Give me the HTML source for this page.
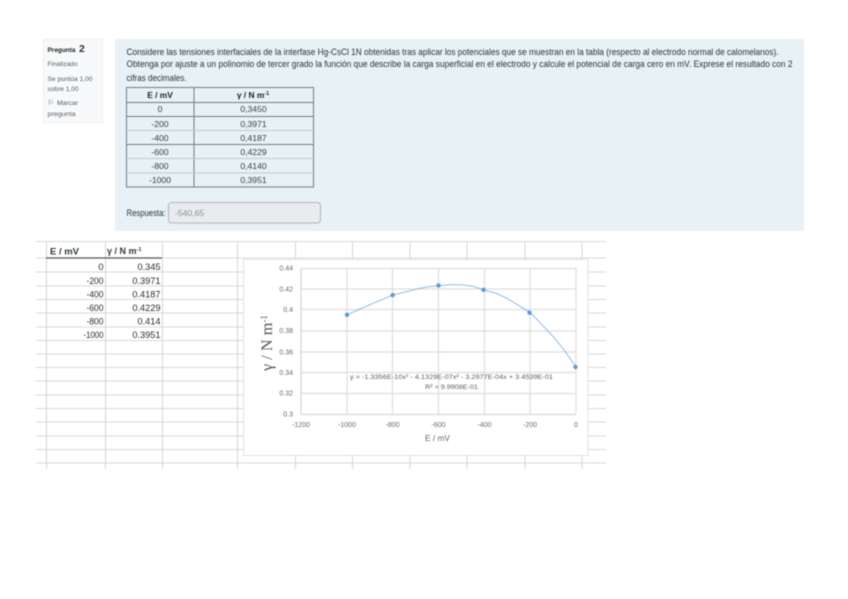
<!DOCTYPE html>
<html lang="es">
<head>
<meta charset="utf-8">
<title>Pregunta 2</title>
<style>
html,body{margin:0;padding:0;background:#fff;width:848px;height:599px;overflow:hidden}
svg{display:block;filter:blur(.5px)}
text{font-family:"Liberation Sans",sans-serif;fill:#333}
.q{font-size:9px;fill:#2a3236}
.s{font-size:6.8px;fill:#565d62}
.t{font-size:8.6px;text-anchor:middle;fill:#3a4145}
.th{font-size:8.4px;text-anchor:middle;font-weight:bold;fill:#222}
.x{font-size:9.2px;text-anchor:end;fill:#2c2c2c}
.a{font-size:7px;fill:#6a6a6a;text-anchor:middle}
.ar{font-size:7px;fill:#6a6a6a;text-anchor:end}
.g{stroke:#dedede;stroke-width:1.2}
.sh{stroke:#d8d8d8;stroke-width:1.1}
</style>
</head>
<body>
<svg width="848" height="599" viewBox="0 0 848 599" xmlns="http://www.w3.org/2000/svg">
<rect width="848" height="599" fill="#fff"/>

<!-- left info -->
<rect x="43.5" y="39.5" width="59" height="83" fill="#f8f9fa" stroke="#eef0f1"/>
<text x="47.5" y="52" style="font-size:6.8px;font-weight:bold;fill:#222" textLength="28" lengthAdjust="spacingAndGlyphs">Pregunta</text>
<text x="79" y="52" style="font-size:10.5px;font-weight:bold;fill:#333">2</text>
<text class="s" x="47.5" y="66" textLength="30" lengthAdjust="spacingAndGlyphs">Finalizado</text>
<text class="s" x="47.5" y="81" textLength="45" lengthAdjust="spacingAndGlyphs">Se puntúa 1,00</text>
<text class="s" x="47.5" y="91" textLength="31" lengthAdjust="spacingAndGlyphs">sobre 1,00</text>
<text class="s" x="47.5" y="105">⚐</text>
<text class="s" x="57" y="105" textLength="21" lengthAdjust="spacingAndGlyphs">Marcar</text>
<text class="s" x="47.5" y="116" textLength="28" lengthAdjust="spacingAndGlyphs">pregunta</text>

<!-- main panel -->
<rect x="115" y="39" width="689" height="192" fill="#e7f1f6"/>
<text class="q" x="126.5" y="55" textLength="652" lengthAdjust="spacingAndGlyphs">Considere las tensiones interfaciales de la interfase Hg-CsCl 1N obtenidas tras aplicar los potenciales que se muestran en la tabla (respecto al electrodo normal de calomelanos).</text>
<text class="q" x="126.5" y="67" textLength="666" lengthAdjust="spacingAndGlyphs">Obtenga por ajuste a un polinomio de tercer grado la función que describe la carga superficial en el electrodo y calcule el potencial de carga cero en mV. Exprese el resultado con 2</text>
<text class="q" x="126.5" y="81" textLength="60" lengthAdjust="spacingAndGlyphs">cifras decimales.</text>

<!-- question table -->
<g fill="none" stroke="#747c80" stroke-width="1">
<rect x="126.500" y="87.500" width="187" height="99.500"/>
<path d="M194 87.500V187M126.500 102.500H313.500M126.500 116.500H313.500M126.500 144.500H313.500"/>
</g>
<path d="M126.500 130.500H313.500M126.500 158.500H313.500M126.500 173H313.500" stroke="#c2cbcf" stroke-width="1" fill="none"/>
<text class="th" x="160" y="98">E / mV</text>
<text class="th" x="253" y="98">γ / N m<tspan dy="-3" style="font-size:5.5px">-1</tspan></text>
<text class="t" x="160" y="112">0</text><text class="t" x="253.500" y="112">0,3450</text>
<text class="t" x="160" y="127">-200</text><text class="t" x="253.500" y="127">0,3971</text>
<text class="t" x="160" y="141">-400</text><text class="t" x="253.500" y="141">0,4187</text>
<text class="t" x="160" y="155">-600</text><text class="t" x="253.500" y="155">0,4229</text>
<text class="t" x="160" y="169">-800</text><text class="t" x="253.500" y="169">0,4140</text>
<text class="t" x="160" y="183">-1000</text><text class="t" x="253.500" y="183">0,3951</text>

<!-- answer -->
<text class="q" x="126.500" y="216" textLength="39" lengthAdjust="spacingAndGlyphs">Respuesta:</text>
<rect x="168.500" y="202.500" width="152" height="20.500" rx="3" fill="#e9ecef" stroke="#aeb6bc"/>
<text x="175" y="216" style="font-size:8.6px;fill:#858d92">-540,65</text>

<!-- spreadsheet grid -->
<path class="sh" fill="none" d="M36 241.500H606M36 272H606M36 286H606M36 299.500H606M36 313H606M36 327H606M36 340.500H606M36 354H606M36 367.500H606M36 381H606M36 395H606M36 408.500H606M36 422H606M36 436H606M36 449.500H606M36 463H606M36 258H606"/>
<path class="sh" fill="none" d="M46.500 241V469M105.500 241V469M162.500 241V469M237.500 241V469M295.500 241V469M352.500 241V469M410 241V469M467 241V469M525 241V469M582 241V469"/>
<path d="M46 258H162" stroke="#555" stroke-width="1.200"/>
<text x="50" y="254.500" style="font-size:9px;font-weight:bold;fill:#2f3a3a" textLength="29" lengthAdjust="spacingAndGlyphs">E / mV</text>
<text x="107" y="254" style="font-size:9px;font-weight:bold;fill:#2f3a3a">γ / N m<tspan dy="-3" style="font-size:5.5px">-1</tspan></text>
<text class="x" x="103.500" y="270">0</text><text class="x" x="160.500" y="270">0.345</text>
<text class="x" x="103.500" y="284" textLength="17" lengthAdjust="spacingAndGlyphs">-200</text><text class="x" x="160.500" y="284">0.3971</text>
<text class="x" x="103.500" y="297.500" textLength="17" lengthAdjust="spacingAndGlyphs">-400</text><text class="x" x="160.500" y="297.500">0.4187</text>
<text class="x" x="103.500" y="311" textLength="17" lengthAdjust="spacingAndGlyphs">-600</text><text class="x" x="160.500" y="311">0.4229</text>
<text class="x" x="103.500" y="324.500" textLength="17" lengthAdjust="spacingAndGlyphs">-800</text><text class="x" x="160.500" y="324.500">0.414</text>
<text class="x" x="103.500" y="338" textLength="20" lengthAdjust="spacingAndGlyphs">-1000</text><text class="x" x="160.500" y="338">0.3951</text>

<!-- chart -->
<rect x="243.500" y="259.500" width="344.500" height="196" fill="#fff" stroke="#e0e0e0"/>
<path class="g" fill="none" d="M301 268.500H576M301 289H576M301 309.500H576M301 331H576M301 352H576M301 372.500H576M301 393.500H576"/>
<path class="g" fill="none" d="M347 268V414M392.500 268V414M438.500 268V414M484.500 268V414M530 268V414M576 268V414"/>
<path d="M301 414.500H576M301 268V414" stroke="#cfcfcf" fill="none"/>
<text class="ar" x="293" y="270.500">0.44</text>
<text class="ar" x="293" y="291.500">0.42</text>
<text class="ar" x="293" y="312">0.4</text>
<text class="ar" x="293" y="333">0.38</text>
<text class="ar" x="293" y="354.500">0.36</text>
<text class="ar" x="293" y="375">0.34</text>
<text class="ar" x="293" y="395.500">0.32</text>
<text class="ar" x="293" y="416.500">0.3</text>
<text class="a" x="301" y="427">-1200</text>
<text class="a" x="347" y="427">-1000</text>
<text class="a" x="392.500" y="427">-800</text>
<text class="a" x="438.500" y="427">-600</text>
<text class="a" x="484.500" y="427">-400</text>
<text class="a" x="530" y="427">-200</text>
<text class="a" x="576" y="427">0</text>
<text x="425" y="441" style="font-size:8px;fill:#666" textLength="25" lengthAdjust="spacingAndGlyphs">E / mV</text>
<text transform="translate(272 371) rotate(-90)" style='font-family:"Liberation Serif",serif;font-size:16px;fill:#555' textLength="56" lengthAdjust="spacingAndGlyphs">γ / N m<tspan dy="-5" style="font-size:9px">-1</tspan></text>
<polyline fill="none" stroke="#5b9bd5" stroke-width="1" stroke-dasharray="1.200 .6" points="347,314.800 369.900,304.700 392.700,295.100 415.600,289.400 427,286.900 438.500,285.800 450,284.700 461.400,284.700 472.900,286.200 484.300,290.200 495.800,293.100 507.200,298.500 518.700,305.400 530.200,312.700 541.600,324.200 553,336.400 564.500,350.500 576,367.100"/>
<g fill="#5b9bd5">
<circle cx="347" cy="314.800" r="2.2"/>
<circle cx="392.700" cy="295.100" r="2.2"/>
<circle cx="438.500" cy="285.500" r="2.2"/>
<circle cx="483.500" cy="289.800" r="2.2"/>
<circle cx="529.500" cy="312.700" r="2.2"/>
<circle cx="575.500" cy="367" r="2.2"/>
</g>
<text x="350" y="379" style="font-size:6.8px;fill:#5e5e5e" textLength="203" lengthAdjust="spacingAndGlyphs">y = -1.3356E-10x³ - 4.1329E-07x² - 3.2977E-04x + 3.4539E-01</text>
<text x="425" y="389" style="font-size:6.8px;fill:#5e5e5e" textLength="53" lengthAdjust="spacingAndGlyphs">R² = 9.9908E-01</text>
</svg>
</body>
</html>
